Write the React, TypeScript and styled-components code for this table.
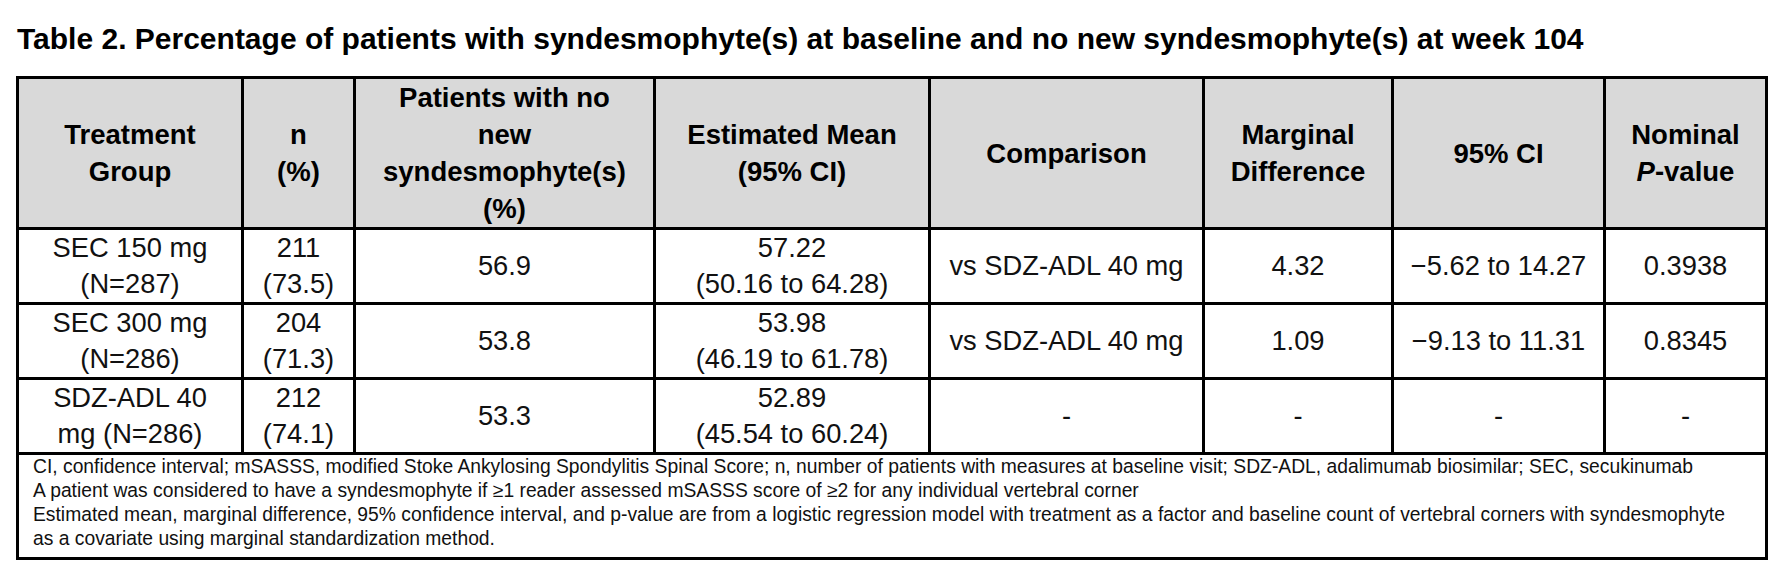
import styled, { createGlobalStyle } from "styled-components";

const GlobalStyle = createGlobalStyle`
  body {
    margin: 0;
    background: #ffffff;
    color: #000000;
    font-family: "Liberation Sans", Arial, sans-serif;
  }
`;

const Page = styled.div`
  width: 1774px;
  padding: 22px 0 0 16px;
  box-sizing: border-box;
`;

const Title = styled.h1`
  margin: 0 0 20px 1px;
  font-size: 30px;
  line-height: 34px;
  font-weight: bold;
  white-space: nowrap;
`;

const Table = styled.table`
  width: 1752px;
  border-collapse: collapse;
  table-layout: fixed;
  border: 3px solid #000;
`;

const Col = styled.col<{ $w: number }>`
  width: ${(p) => p.$w}px;
`;

const Row = styled.tr<{ $h: number }>`
  height: ${(p) => p.$h}px;
`;

const HeadCell = styled.th`
  background: #d9d9d9;
  border: 3px solid #000;
  padding: 0;
  font-size: 27.5px;
  line-height: 37px;
  font-weight: bold;
  text-align: center;
  vertical-align: middle;
  white-space: nowrap;
`;

const Cell = styled.td`
  border: 3px solid #000;
  padding: 0;
  font-size: 27.3px;
  line-height: 36px;
  color: #111;
  text-align: center;
  vertical-align: middle;
  white-space: nowrap;
`;

const NoteCell = styled.td`
  border: 3px solid #000;
  padding: 0 8px 6px 14px;
  font-size: 19.3px;
  line-height: 24px;
  color: #111;
  text-align: left;
  vertical-align: top;
`;

const NoteLine = styled.div`
  white-space: nowrap;
`;

interface IRow {
  group: [string, string];
  n: [string, string];
  noNew: string;
  mean: [string, string];
  comparison: string;
  diff: string;
  ci: string;
  p: string;
}

const rows: IRow[] = [
  {
    group: ["SEC 150 mg", "(N=287)"],
    n: ["211", "(73.5)"],
    noNew: "56.9",
    mean: ["57.22", "(50.16 to 64.28)"],
    comparison: "vs SDZ-ADL 40 mg",
    diff: "4.32",
    ci: "\u22125.62 to 14.27",
    p: "0.3938",
  },
  {
    group: ["SEC 300 mg", "(N=286)"],
    n: ["204", "(71.3)"],
    noNew: "53.8",
    mean: ["53.98", "(46.19 to 61.78)"],
    comparison: "vs SDZ-ADL 40 mg",
    diff: "1.09",
    ci: "\u22129.13 to 11.31",
    p: "0.8345",
  },
  {
    group: ["SDZ-ADL 40", "mg (N=286)"],
    n: ["212", "(74.1)"],
    noNew: "53.3",
    mean: ["52.89", "(45.54 to 60.24)"],
    comparison: "-",
    diff: "-",
    ci: "-",
    p: "-",
  },
];

const widths = [225, 112, 300, 275, 274, 189, 212, 162];

const notes = [
  "CI, confidence interval; mSASSS, modified Stoke Ankylosing Spondylitis Spinal Score; n, number of patients with measures at baseline visit; SDZ-ADL, adalimumab biosimilar; SEC, secukinumab",
  "A patient was considered to have a syndesmophyte if \u22651 reader assessed mSASSS score of \u22652 for any individual vertebral corner",
  "Estimated mean, marginal difference, 95% confidence interval, and p-value are from a logistic regression model with treatment as a factor and baseline count of vertebral corners with syndesmophyte",
  "as a covariate using marginal standardization method.",
];

const App = () => {
  return (
    <Page>
      <GlobalStyle />
      <Title>
        Table 2. Percentage of patients with syndesmophyte(s) at baseline and no
        new syndesmophyte(s) at week 104
      </Title>
      <Table>
        <colgroup>
          {widths.map((w, i) => (
            <Col key={i} $w={w} />
          ))}
        </colgroup>
        <thead>
          <Row $h={147}>
            <HeadCell>
              Treatment
              <br />
              Group
            </HeadCell>
            <HeadCell>
              n
              <br />
              (%)
            </HeadCell>
            <HeadCell>
              Patients with no
              <br />
              new
              <br />
              syndesmophyte(s)
              <br />
              (%)
            </HeadCell>
            <HeadCell>
              Estimated Mean
              <br />
              (95% CI)
            </HeadCell>
            <HeadCell>Comparison</HeadCell>
            <HeadCell>
              Marginal
              <br />
              Difference
            </HeadCell>
            <HeadCell>95% CI</HeadCell>
            <HeadCell>
              Nominal
              <br />
              <i>P</i>-value
            </HeadCell>
          </Row>
        </thead>
        <tbody>
          {rows.map((r) => (
            <Row $h={75} key={r.group.join(" ")}>
              <Cell>
                {r.group[0]}
                <br />
                {r.group[1]}
              </Cell>
              <Cell>
                {r.n[0]}
                <br />
                {r.n[1]}
              </Cell>
              <Cell>{r.noNew}</Cell>
              <Cell>
                {r.mean[0]}
                <br />
                {r.mean[1]}
              </Cell>
              <Cell>{r.comparison}</Cell>
              <Cell>{r.diff}</Cell>
              <Cell>{r.ci}</Cell>
              <Cell>{r.p}</Cell>
            </Row>
          ))}
          <Row $h={104}>
            <NoteCell colSpan={8}>
              {notes.map((n) => (
                <NoteLine key={n}>{n}</NoteLine>
              ))}
            </NoteCell>
          </Row>
        </tbody>
      </Table>
    </Page>
  );
};

export default App;
